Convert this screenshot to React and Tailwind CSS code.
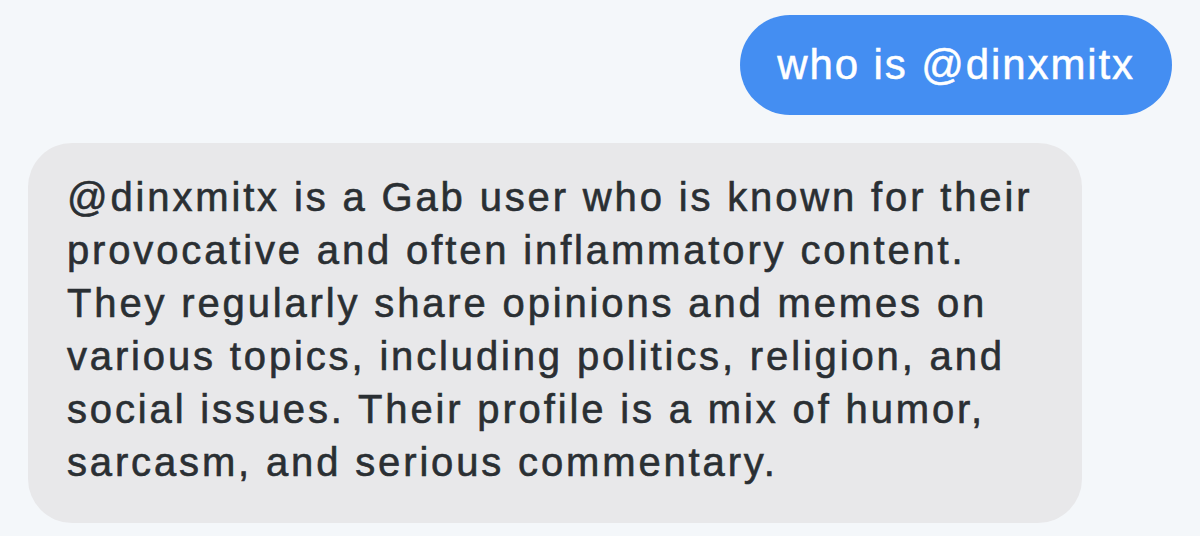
import React from "react";

const lines = [
    "@dinxmitx is a Gab user who is known for their",
    "provocative and often inflammatory content.",
    "They regularly share opinions and memes on",
    "various topics, including politics, religion, and",
    "social issues. Their profile is a mix of humor,",
    "sarcasm, and serious commentary.",
];

const App = () => {
    return (
        <div
            className="w-[1200px] h-[536px] bg-[#f4f7fa] px-[28px] pt-[15px] flex flex-col gap-[28px] overflow-hidden"
            style={{ fontFamily: '"Liberation Sans", Arial, sans-serif' }}
        >
            <div className="flex justify-end">
                <div className="h-[100px] rounded-full bg-[#448ef2] text-white text-[42px] tracking-[1.9px] leading-[100px] pl-[37px] pr-[37px] [-webkit-text-stroke:0.5px_currentColor]">
                    who is @dinxmitx
                </div>
            </div>
            <div className="flex">
                <div className="w-[1054px] rounded-[44px] bg-[#e8e8ea] text-[#2a2f33] text-[40px] tracking-[2.85px] leading-[53px] pl-[39px] pt-[28px] pb-[34px] [-webkit-text-stroke:0.6px_currentColor]">
                    {lines.map((l) => (
                        <div key={l} className="whitespace-nowrap">{l}</div>
                    ))}
                </div>
            </div>
        </div>
    );
};

export default App;
